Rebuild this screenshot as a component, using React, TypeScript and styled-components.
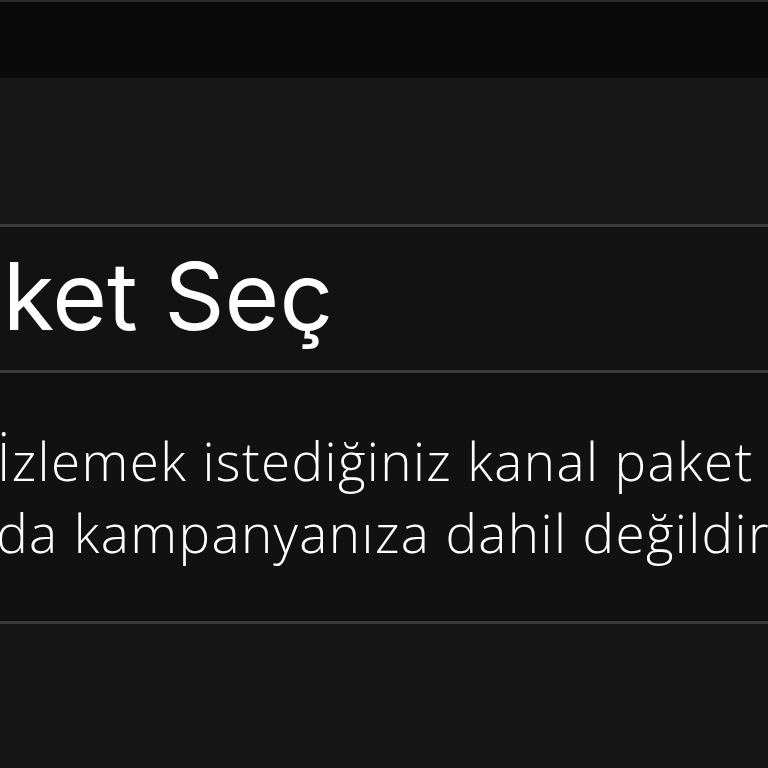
import React from "react";
import styled, { createGlobalStyle } from "styled-components";

const GlobalStyle = createGlobalStyle`
  html, body {
    margin: 0;
    padding: 0;
    background: #161616;
    overflow: hidden;
  }
  #root {
    width: 768px;
    height: 768px;
  }
`;

const Frame = styled.div`
  width: 768px;
  height: 768px;
  display: flex;
  flex-direction: column;
  overflow: hidden;
  background: #161616;
  font-family: Inter, "Noto Sans", sans-serif;
  color: #ffffff;
`;

const TopBar = styled.div`
  height: 76px;
  flex-shrink: 0;
  background: #0a0a0a;
  border-top: 2px solid #2a2a2a;
`;

const Spacer = styled.div`
  height: 146px;
  flex-shrink: 0;
  background: #171717;
`;

const Divider = styled.div`
  height: 3px;
  flex-shrink: 0;
  background: #3b3b3b;
`;

const TitleRow = styled.div`
  height: 143px;
  flex-shrink: 0;
  display: flex;
  align-items: center;
  padding-bottom: 6px;
  box-sizing: border-box;
  background: #121212;
`;

const Title = styled.h2<{ $shift: number }>`
  margin: 0 0 0 ${(p) => p.$shift}px;
  font-size: 94px;
  font-weight: 400;
  white-space: nowrap;
  line-height: 1;
`;

const Body = styled.div`
  height: 248px;
  flex-shrink: 0;
  display: flex;
  flex-direction: column;
  padding-top: 52px;
  box-sizing: border-box;
  background: #111111;
  font-family: "Open Sans", Inter, sans-serif;
`;

const Line = styled.p<{ $shift: number }>`
  margin: 0 0 0 ${(p) => p.$shift}px;
  font-size: 53px;
  font-weight: 300;
  line-height: 72px;
  letter-spacing: 1.4px;
  white-space: nowrap;
`;

const Footer = styled.div`
  flex: 1;
  background: #161616;
`;

export default function App() {
  return (
    <>
      <GlobalStyle />
      <Frame>
        <TopBar />
        <Spacer />
        <Divider />
        <TitleRow>
          <Title $shift={-110}>Paket Seç</Title>
        </TitleRow>
        <Divider />
        <Body>
          <Line $shift={-3}>İzlemek istediğiniz kanal paket  seçeneği şu</Line>
          <Line $shift={-66}>anda kampanyanıza dahil değildir.</Line>
        </Body>
        <Divider />
        <Footer />
      </Frame>
    </>
  );
}
